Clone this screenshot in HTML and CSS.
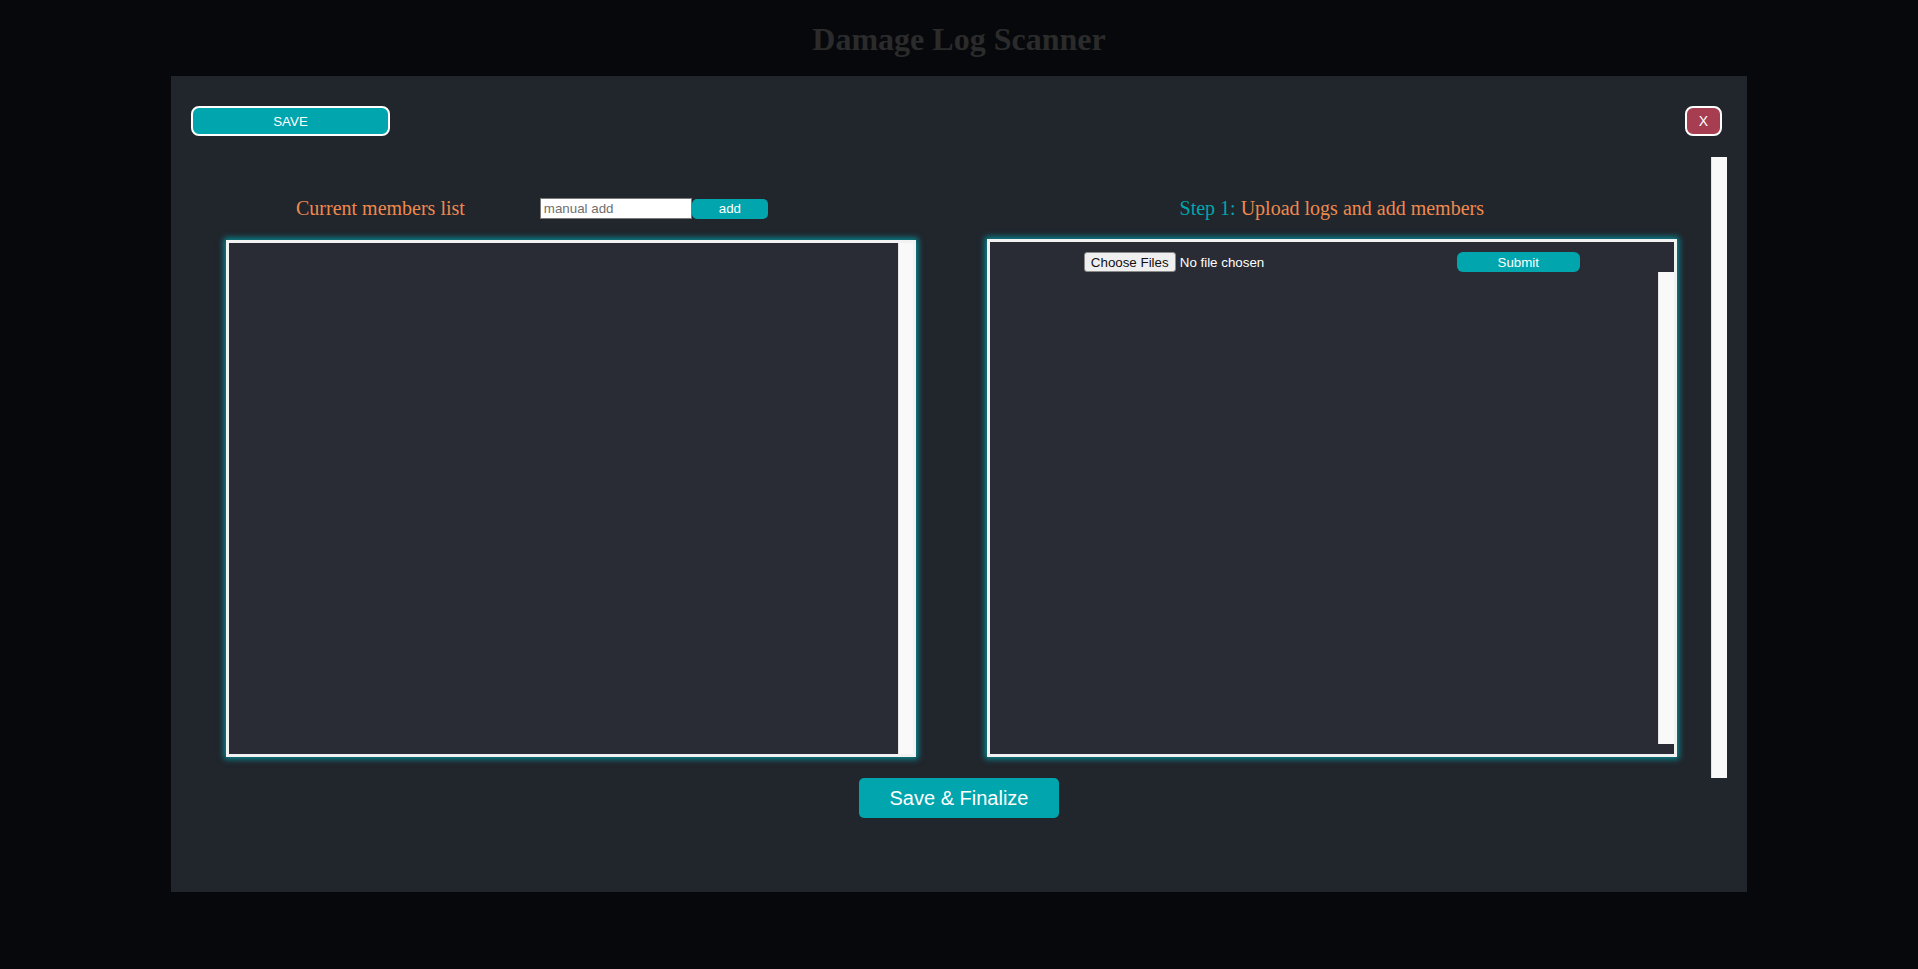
FILE: index.html
```html
<!DOCTYPE html>
<html lang="en">
<head>
<meta charset="utf-8">
<title>Damage Log Scanner</title>
<link rel="stylesheet" href="styles.css">
</head>
<body>
  <h1 class="page-title">Damage Log Scanner</h1>
  <div class="modal">
    <div class="modal-top">
      <button class="btn-save">SAVE</button>
      <button class="btn-close">X</button>
    </div>
    <div class="modal-body">
      <section class="column">
        <div class="col-head col-head-left">
          <h3 class="col-title">Current members list</h3>
          <form class="manual-form">
            <input class="manual-input" type="text" placeholder="manual add">
            <button class="btn-add" type="button">add</button>
          </form>
        </div>
        <div class="panel panel-scroll"></div>
      </section>
      <section class="column">
        <div class="col-head col-head-right">
          <h3 class="col-title"><span class="step">Step 1:</span> Upload logs and add members</h3>
        </div>
        <div class="panel panel-upload">
          <div class="upload-row">
            <input class="file-input" type="file" multiple>
            <button class="btn-submit" type="button">Submit</button>
          </div>
          <div class="log-list"></div>
        </div>
      </section>
    </div>
    <div class="modal-foot">
      <button class="btn-finalize">Save &amp; Finalize</button>
    </div>
  </div>
</body>
</html>
```

FILE: styles.css
```css
html, body {
  margin: 0;
  padding: 0;
  background: #06080b;
  height: 969px;
  overflow: hidden;
}

.page-title {
  margin: 21px 0 18px;
  line-height: 37px;
  height: 37px;
  text-align: center;
  font-family: "Liberation Serif", serif;
  font-size: 32px;
  font-weight: bold;
  color: #2b2b2c;
}

.modal {
  width: 1576px;
  height: 816px;
  margin: 0 auto;
  background: #21252c;
  box-sizing: border-box;
  padding: 30px 20px 0 20px;
  display: flex;
  flex-direction: column;
}

.modal-top {
  display: flex;
  justify-content: space-between;
  align-items: flex-start;
  padding-right: 5px;
  height: 30px;
}

.btn-save {
  width: 199px;
  height: 30px;
  background: #00a5ae;
  border: 2px solid #ffffff;
  border-radius: 8px;
  color: #ffffff;
  font-family: "Liberation Sans", Arial, sans-serif;
  font-size: 13.33px;
  padding: 0;
}

.btn-close {
  width: 37px;
  height: 30px;
  background: #a63d51;
  border: 2px solid #ffffff;
  border-radius: 8px;
  color: #ffffff;
  font-family: "Liberation Sans", Arial, sans-serif;
  font-size: 14px;
  padding: 0;
}

/* scroll area: track drawn on the right edge */
.modal-body {
  margin-top: 21px;
  height: 621px;
  box-sizing: border-box;
  padding-right: 15px;
  overflow: hidden;
  display: grid;
  grid-template-columns: 1fr 1fr;
  align-content: start;
  box-shadow: inset -15px 0 0 #f9f9f9, inset -16px 0 0 #e4e4e4;
}

.column {
  padding-top: 40px;
  display: flex;
  flex-direction: column;
  align-items: center;
}

.col-head {
  height: 23px;
  width: 100%;
  display: flex;
  align-items: center;
  margin-bottom: 20px;
}

.col-head-left {
  padding-left: 105px;
  box-sizing: border-box;
}

.col-head-right {
  justify-content: center;
}

.col-title {
  margin: 0;
  font-family: "Liberation Serif", serif;
  font-size: 20px;
  font-weight: normal;
  line-height: 23px;
  color: #ee8a4e;
  white-space: nowrap;
}

.step {
  color: #00a5ae;
}

.manual-form {
  display: flex;
  align-items: center;
  margin: 0 0 0 75px;
}

.manual-input {
  width: 152px;
  height: 21px;
  box-sizing: border-box;
  margin: 0;
  padding: 1px 3px;
  border: 1px solid #7a7a7a;
  background: #ffffff;
  font-family: "Liberation Sans", Arial, sans-serif;
  font-size: 13.33px;
  color: #222;
}

.manual-input::placeholder {
  color: #6f6f6f;
}

.btn-add {
  width: 76px;
  height: 20px;
  padding: 0;
  border: none;
  border-radius: 5px;
  background: #00a5ae;
  color: #ffffff;
  font-family: "Liberation Sans", Arial, sans-serif;
  font-size: 13.33px;
}

.panel {
  width: 690px;
  height: 517px;
  box-sizing: border-box;
  border: 3px solid #f2f2f2;
  background: #292c35;
  box-shadow: 0 0 6px 2px rgba(0, 165, 174, 0.8);
}

.panel-scroll {
  overflow: hidden;
  box-shadow: 0 0 6px 2px rgba(0, 165, 174, 0.8), inset -14px 0 0 #f9f9f9, inset -15px 0 0 #e4e4e4;
}

.panel-upload {
  display: flex;
  flex-direction: column;
  height: 518px;
  margin-top: -1px;
}

.upload-row {
  display: flex;
  justify-content: space-between;
  align-items: center;
  padding: 10px 94px 0 94px;
  height: 30px;
  box-sizing: border-box;
}

.file-input {
  width: 240px;
  height: 20px;
  color: #ffffff;
  font-family: "Liberation Sans", Arial, sans-serif;
  font-size: 13.33px;
  margin-left: 0;
}

.file-input::file-selector-button {
  width: 92px;
  height: 20px;
  margin: 0 4px 0 0;
  padding: 0;
  background: #efefef;
  border: 1px solid #8a8a8a;
  border-radius: 3px;
  color: #111;
  font-family: "Liberation Sans", Arial, sans-serif;
  font-size: 13.33px;
}

.btn-submit {
  width: 123px;
  height: 20px;
  padding: 0;
  border: none;
  border-radius: 6px;
  background: #00a5ae;
  color: #ffffff;
  font-family: "Liberation Sans", Arial, sans-serif;
  font-size: 13.33px;
}

.log-list {
  height: 472px;
  overflow: hidden;
  box-shadow: inset -15px 0 0 #f9f9f9, inset -16px 0 0 #e4e4e4;
}

.modal-foot {
  display: flex;
  justify-content: center;
}

.btn-finalize {
  width: 200px;
  height: 40px;
  padding: 0;
  border: none;
  border-radius: 5px;
  background: #00a5ae;
  color: #ffffff;
  font-family: "Liberation Sans", Arial, sans-serif;
  font-size: 20px;
}
```
